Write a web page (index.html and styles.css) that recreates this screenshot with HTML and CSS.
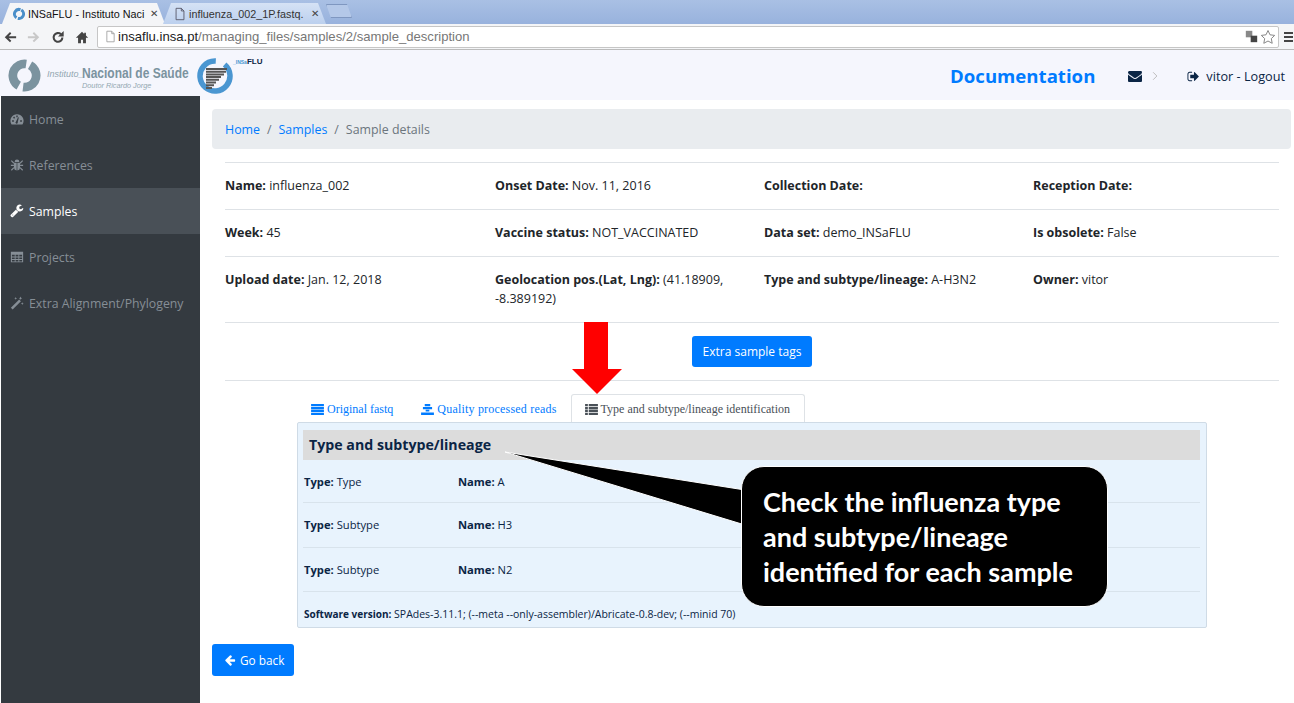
FILE: index.html
```html
<!DOCTYPE html>
<html>
  <head lang="en">
    <meta charset="UTF-8" />
    <title>INSaFLU - Sample details</title>
    <link rel="stylesheet" href="styles.css">
  </head>

  <body>
    <!-- browser chrome -->
    <div class="tabstrip">
      <div class="btab active">
        <svg class="favicon" viewBox="0 0 16 16"><circle cx="8" cy="8" r="5.200" fill="none" stroke="#4a8fc9" stroke-width="3.400" stroke-dasharray="14.500 1.800" transform="rotate(-60 8 8)"/></svg>
        <span class="btab-title">INSaFLU - Instituto Naci</span>
        <span class="btab-x">✕</span>
      </div>
      <div class="btab">
        <svg class="favicon" viewBox="0 0 16 16"><path d="M3.500 1.500h6l3 3v10h-9zM9.500 1.500v3h3" fill="none" stroke="#556"/></svg>
        <span class="btab-title">influenza_002_1P.fastq.</span>
        <span class="btab-x">✕</span>
      </div>
      <div class="btab-new"></div>
    </div>
    <div class="toolbar">
      <svg class="tool" viewBox="0 0 16 16"><path d="M15 7v2.400H6.500l3 3L8 14 2 8.200 8 2.400 9.500 4l-3 3z" fill="#444"/></svg>
      <svg class="tool" viewBox="0 0 16 16"><path d="M1 7v2.400h8.500l-3 3L8 14l6-5.800-6-5.800L6.500 4l3 3z" fill="#c8c8c8"/></svg>
      <svg class="tool" viewBox="0 0 16 16"><path d="M13 8.500a5 5 0 1 1-1.600-3.700" fill="none" stroke="#444" stroke-width="2.400"/><path d="M14.500 1v6.500H8z" fill="#444"/></svg>
      <svg class="tool" viewBox="0 0 16 16"><path d="M8 2 1 8.800h2.500V15h3.300v-4h2.400v4h3.300V8.800H15l-2.500-2.400V3h-2v1.500z" fill="#444"/></svg>
      <div class="omnibox">
        <svg class="omni-page" viewBox="0 0 16 16"><path d="M3.500 1.500h6l3 3v10h-9zM9.500 1.500v3h3" fill="#fff" stroke="#999"/></svg>
        <span class="url"><b>insaflu.insa.pt</b>/managing_files/samples/2/sample_description</span>
        <svg class="omni-tr" viewBox="0 0 16 16"><rect x="1" y="1" width="8" height="8" fill="#888"/><rect x="7" y="7" width="8" height="8" fill="#444"/></svg>
        <svg class="omni-star" viewBox="0 0 16 16"><path d="m8 1.500 2 4.300 4.700.6-3.400 3.200.9 4.700L8 12l-4.200 2.300.9-4.700L1.300 6.400 6 5.800z" fill="#fff" stroke="#888"/></svg>
      </div>
      <div class="menu-bars"><i></i><i></i><i></i></div>
    </div>

    <!-- site header -->
    <header class="topbar">
      <svg class="logo-insa" viewBox="0 0 34 34"><circle cx="17" cy="17" r="12" fill="none" stroke="#7b939f" stroke-width="9" stroke-dasharray="33 4.700" transform="rotate(-61.500 17 17)"/></svg>
      <div class="insa-text">
        <div class="insa-name"><em>Instituto_</em><strong>Nacional de Saúde</strong></div>
        <div class="insa-sub">Doutor Ricardo Jorge</div>
      </div>
      <svg class="logo-flu" viewBox="0 0 36 36">
        <circle cx="18" cy="18" r="15" fill="none" stroke="#4a96d1" stroke-width="5.500" stroke-dasharray="84 10.200" transform="rotate(-50 18 18)"/>
        <path d="M9 10h21v2H9zM9 12.700h20v2H9zM9 15.400h18v2H9zM9 18.100h15v2H9zM9 20.800h13v2H9zM9 23.500h10v2H9zM9 26.200h8v2H9zM9 28.900h6v2H9z" fill="#555"/>
      </svg>
      <div class="flu-text"><span>_INSa</span>FLU</div>
      <a class="doc-link">Documentation</a>
      <svg class="mail" viewBox="0 0 1792 1792"><path fill="#0b2545" d="M1792 710v794q0 66-47 113t-113 47h-1472q-66 0-113-47t-47-113v-794q44 49 101 87 362 246 497 345 57 42 92.500 65.500t94.500 48 110 24.500h2q51 0 110-24.500t94.500-48 92.500-65.500q170-123 498-345 57-39 100-87zm0-294q0 79-49 151t-122 123q-376 261-468 325-10 7-42.500 30.500t-54 38-52 32.500-57.500 27-50 9h-2q-23 0-50-9t-57.500-27-52-32.500-54-38-42.500-30.500q-91-64-262-182.500t-205-142.500q-62-42-117-115.500t-55-136.500q0-78 41.500-130t118.500-52h1472q65 0 112.500 47t47.500 113z"/></svg>
      <svg class="chev" viewBox="0 0 8 12"><path d="m1.500 1 5 5-5 5" fill="none" stroke="#bbb" stroke-width="1.300"/></svg>
      <svg class="signout" viewBox="0 0 1792 1792"><path fill="#0b2545" d="M704 1440q0 4 1 20t.5 26.500-3 23.500-10 19.500-20.500 6.500h-320q-119 0-203.500-84.500t-84.500-203.500v-704q0-119 84.500-203.500t203.500-84.500h320q13 0 22.500 9.500t9.500 22.500q0 4 1 20t.5 26.500-3 23.500-10 19.500-20.500 6.500h-320q-66 0-113 47t-47 113v704q0 66 47 113t113 47h312l11.500 1 11.500 3 8 5.500 7 9 2 13.500zm928-544q0 26-19 45l-544 544q-19 19-45 19t-45-19-19-45v-288h-448q-26 0-45-19t-19-45v-384q0-26 19-45t45-19h448v-288q0-26 19-45t45-19 45 19l544 544q19 19 19 45z"/></svg>
      <span class="user">vitor - Logout</span>
    </header>

    <div class="layout">
      <nav class="sidebar">
        <a class="side-item">
          <svg class="side-icon" viewBox="0 0 16 16"><path fill-rule="evenodd" d="M8 2.500a7.500 7.500 0 0 0-6.800 10.700l.6 1h12.400l.6-1A7.500 7.500 0 0 0 8 2.500zM7.200 4h1.600v2H7.200zM3.500 6l1.400-.8 1 1.700-1.400.8zM2.400 9.500h2v1.600h-2zM11.600 9.500h2v1.600h-2zM6.800 11l2.400-5 .9.300-1.300 5.300a1.300 1.300 0 1 1-2-.6z" fill="currentColor"/></svg>
          Home
        </a>
        <a class="side-item">
          <svg class="side-icon" viewBox="0 0 16 16"><path d="M5.300 4.500a2.700 2.700 0 0 1 5.400 0zM4.500 5.500h3.100v8.700a3.500 3.500 0 0 1-3.100-3.200zM8.400 5.500h3.100V11a3.500 3.500 0 0 1-3.100 3.200z" fill="currentColor"/><path d="M1.500 3l3 3M14.500 3l-3 3M1 8.500h3.500M15 8.500h-3.500M1.500 14l3-3M14.500 14l-3-3" stroke="currentColor" stroke-width="1.300"/></svg>
          References
        </a>
        <a class="side-item current">
          <svg class="side-icon" viewBox="0 0 1792 1792"><path fill="currentColor" d="M424 1408q0-26-19-45t-45-19-45 19-19 45 19 45 45 19 45-19 19-45zm644-420l-682 682q-37 37-90 37-52 0-91-37l-106-108q-38-36-38-90 0-53 38-91l681-681q39 98 114.500 173.500t173.500 114.500zm634-435q0 39-23 106-47 134-164.500 217.500t-258.500 83.500q-185 0-316.500-131.500t-131.500-316.500 131.500-316.500 316.500-131.500q58 0 121.500 16.500t107.500 46.500q16 11 16 28t-16 28l-293 169v224l193 111q5-3 79-48.500t135.500-81 70.500-35.500q15 0 23.500 10t8.500 25z"/></svg>
          Samples
        </a>
        <a class="side-item">
          <svg class="side-icon" viewBox="0 0 16 16"><path fill-rule="evenodd" d="M1 2h14v12H1zM2.200 5.500v2h3.200v-2zm4.200 0v2h3.200v-2zm4.200 0v2h3.200v-2zM2.200 8.500v1.800h3.200V8.500zm4.200 0v1.800h3.200V8.500zm4.200 0v1.800h3.200V8.500zM2.200 11.300V13h3.200v-1.700zm4.200 0V13h3.200v-1.700zm4.200 0V13h3.200v-1.700z" fill="currentColor"/></svg>
          Projects
        </a>
        <a class="side-item">
          <svg class="side-icon" viewBox="0 0 16 16"><path d="M1 13.500 10.500 4l2 2L3 15.500zM12 .5l.6 1.400L14 2.500l-1.400.6L12 4.500l-.6-1.400L10 2.500l1.400-.6zM6.500 1l.5 1.200 1.200.5-1.200.5-.5 1.200L6 3.200l-1.200-.5L6 2.200zM14 7l.5 1.200 1.200.5-1.200.5-.5 1.200-.5-1.200-1.200-.5 1.200-.5z" fill="currentColor"/></svg>
          Extra Alignment/Phylogeny
        </a>
      </nav>

      <main class="content">
        <ol class="breadcrumb">
          <li><a>Home</a></li>
          <li><a>Samples</a></li>
          <li class="now">Sample details</li>
        </ol>

        <table class="details">
          <tr>
            <td><b>Name:</b> influenza_002</td>
            <td><b>Onset Date:</b> Nov. 11, 2016</td>
            <td><b>Collection Date:</b></td>
            <td><b>Reception Date:</b></td>
          </tr>
          <tr>
            <td><b>Week:</b> 45</td>
            <td><b>Vaccine status:</b> NOT_VACCINATED</td>
            <td><b>Data set:</b> demo_INSaFLU</td>
            <td><b>Is obsolete:</b> False</td>
          </tr>
          <tr>
            <td><b>Upload date:</b> Jan. 12, 2018</td>
            <td><b>Geolocation pos.(Lat, Lng):</b> (41.18909, -8.389192)</td>
            <td><b>Type and subtype/lineage:</b> A-H3N2</td>
            <td><b>Owner:</b> vitor</td>
          </tr>
        </table>

        <div class="tags-row">
          <a class="btn">Extra sample tags</a>
        </div>

        <div class="tabs">
          <a class="tab">
            <svg class="tab-icon" viewBox="0 0 14 12"><path d="M0 0h14v2.400H0zM0 3.200h14v2.400H0zM0 6.400h14v2.400H0zM0 9.600h14V12H0z" fill="currentColor"/></svg>
            Original fastq
          </a>
          <a class="tab wide">
            <svg class="tab-icon" viewBox="0 0 14 12"><path d="M4 0h6v2.400H4zM2 3.200h10v2.400H2zM5 6.400h4v1.800H5zM0 9.200h14V12H0z" fill="currentColor"/></svg>
            Quality processed reads
          </a>
          <a class="tab selected">
            <svg class="tab-icon" viewBox="0 0 14 12"><path d="M0 0h3v2.400H0zM4 0h10v2.400H4zM0 3.200h3v2.400H0zM4 3.200h10v2.400H4zM0 6.400h3v2.400H0zM4 6.400h10v2.400H4zM0 9.600h3V12H0zM4 9.600h10V12H4z" fill="currentColor"/></svg>
            Type and subtype/lineage identification
          </a>
        </div>

        <section class="panel">
          <h4 class="panel-title">Type and subtype/lineage</h4>
          <div class="panel-row">
            <span class="cell-type"><b>Type:</b> Type</span>
            <span><b>Name:</b> A</span>
          </div>
          <div class="panel-row">
            <span class="cell-type"><b>Type:</b> Subtype</span>
            <span><b>Name:</b> H3</span>
          </div>
          <div class="panel-row">
            <span class="cell-type"><b>Type:</b> Subtype</span>
            <span><b>Name:</b> N2</span>
          </div>
          <div class="panel-row software">
            <span><b>Software version:</b> SPAdes-3.11.1; (--meta --only-assembler)/Abricate-0.8-dev; (--minid 70)</span>
          </div>
        </section>

        <a class="btn back">
          <svg class="back-icon" viewBox="0 0 1792 1792"><path fill="currentColor" d="M1664 896v128q0 53-32.500 90.500t-84.500 37.500h-704l293 294q38 36 38 90t-38 90l-75 76q-37 37-90 37-52 0-91-37l-651-652q-37-37-37-90 0-52 37-91l651-650q38-38 91-38 52 0 90 38l75 74q38 38 38 91t-38 91l-293 293h704q52 0 84.500 37.500t32.500 90.500z"/></svg>
          Go back
        </a>
      </main>
    </div>

    <!-- annotations drawn over the page -->
    <svg class="red-arrow" viewBox="0 0 50 72"><path d="M12 0h24v47h14L25 72 0 47h12z" fill="#f00"/></svg>
    <svg class="pointer" viewBox="0 0 250 80"><path d="M2 2 242 40v35z" fill="#000" stroke="#fff" stroke-width="1"/></svg>
    <div class="callout">Check the influenza type and subtype/lineage identified for each sample</div>
  </body>
</html>
```

FILE: styles.css
```css
* {
  padding: 0;
  margin: 0;
  box-sizing: border-box;
}

html,
body {
  height: 703px;
  overflow: hidden;
}

body {
  background-color: #fff;
  color: #0b2545;
  font: 13px "Open Sans", "Noto Sans", sans-serif;
  position: relative;
}

/* browser chrome */
.tabstrip {
  display: flex;
  align-items: flex-end;
  height: 24px;
  padding-left: 2px;
  background: linear-gradient(#a9c0e4, #98b2dd);
}

.btab {
  display: flex;
  align-items: center;
  width: 163px;
  height: 21px;
  margin-right: -2px;
  padding: 0 7px 0 10px;
  background: linear-gradient(#d5e2f5, #bcd0ee);
  clip-path: polygon(0 100%, 8px 0, calc(100% - 8px) 0, 100% 100%);
  font: 10.8px "Liberation Sans", sans-serif;
  color: #333;
}

.btab.active {
  background: #f4f5f7;
  color: #111;
}

.favicon {
  width: 14px;
  height: 14px;
  margin-right: 2px;
  flex: none;
}

.btab-title {
  flex: 1;
  overflow: hidden;
  white-space: nowrap;
}

.btab-x {
  font-size: 10px;
  color: #444;
  margin-left: 1px;
}

.btab-new {
  width: 26px;
  height: 14px;
  margin: 0 0 6px 2px;
  background-color: #b4c8e8;
  border: 1px solid #7f97c0;
  clip-path: polygon(0 0, calc(100% - 5px) 0, 100% 100%, 5px 100%);
}

.toolbar {
  display: flex;
  align-items: center;
  gap: 10px;
  height: 26px;
  padding-left: 3px;
  background-color: #f4f5f7;
  border-bottom: 1px solid #bbb;
}

.tool {
  width: 14px;
  height: 14px;
  flex: none;
}

.omnibox {
  display: flex;
  align-items: center;
  flex: 1;
  height: 22px;
  margin-left: -2px;
  padding: 0 2px 0 6px;
  background-color: #fff;
  border: 1px solid #c6c6c6;
  border-radius: 2px;
}

.omni-page {
  width: 13px;
  height: 13px;
  margin-right: 1px;
}

.url {
  flex: 1;
  font: 13.1px "Liberation Sans", sans-serif;
  color: #777;
}

.url b {
  font-weight: normal;
  color: #222;
}

.omni-tr {
  width: 13px;
  height: 13px;
  margin-right: 2px;
}

.omni-star {
  width: 16px;
  height: 16px;
}

.menu-bars {
  display: flex;
  flex-direction: column;
  gap: 2px;
  width: 9px;
  margin: 0 1px 0 -5px;
}

.menu-bars i {
  height: 2px;
  background-color: #444;
}

/* site header */
.topbar {
  display: flex;
  align-items: flex-start;
  height: 46px;
  padding: 9px 9px 0 8px;
  background-color: #f5f6fd;
}

.logo-insa {
  width: 33px;
  height: 33px;
  flex: none;
}

.insa-text {
  width: 150px;
  margin: 4px 0 0 6px;
  flex: none;
  color: #7b939f;
  white-space: nowrap;
}

.insa-name {
  display: flex;
  align-items: flex-end;
  height: 18px;
}

.insa-name em {
  width: 35px;
  font: italic 9px/13px "Liberation Sans", sans-serif;
  color: #93a7b1;
}

.insa-name strong {
  font: bold 15px/17px "Liberation Sans", sans-serif;
  transform: scaleX(0.8);
  transform-origin: left;
}

.insa-sub {
  padding-left: 35px;
  font: italic 7.3px/9px "Liberation Sans", sans-serif;
  color: #93a7b1;
}

.logo-flu {
  width: 36px;
  height: 36px;
  margin-top: -1px;
  flex: none;
}

.flu-text {
  margin-top: -2px;
  font: bold 8px/10px "Liberation Sans", sans-serif;
  color: #0b2545;
}

.flu-text span {
  font-size: 5px;
  color: #4a96d1;
}

.doc-link {
  margin: 4px 0 0 auto;
  font-size: 18.6px;
  line-height: 26px;
  font-weight: 700;
  color: #007bff;
}

.mail {
  width: 14px;
  height: 14px;
  margin: 10px 0 0 33px;
}

.chev {
  width: 6px;
  height: 10px;
  margin: 12px 0 0 10px;
}

.signout {
  width: 13px;
  height: 13px;
  margin: 11px 0 0 29px;
}

.user {
  margin: 8px 0 0 6px;
  font-size: 12.7px;
  color: #0b2545;
}

/* sidebar + page */
.layout {
  display: flex;
  height: 607px;
}

.sidebar {
  width: 199px;
  margin-left: 1px;
  flex: none;
  background-color: #343a40;
}

.side-item {
  display: flex;
  align-items: center;
  height: 46px;
  padding-left: 9px;
  font-size: 12.3px;
  color: #868e96;
  white-space: nowrap;
}

.side-item.current {
  background-color: #495057;
  color: #fff;
}

.side-icon {
  width: 14px;
  height: 14px;
  margin-right: 5px;
  flex: none;
}

.content {
  flex: 1;
  padding: 9px 3px 0 12px;
  border-top: 4px solid #f5f6fd;
  min-width: 0;
}

.breadcrumb {
  display: flex;
  height: 40px;
  align-items: center;
  padding-left: 13px;
  background-color: #e9ecef;
  border-radius: 4px;
  font-size: 12.4px;
  list-style: none;
}

.breadcrumb a {
  color: #007bff;
}

.breadcrumb li + li::before {
  content: "/";
  padding: 0 7px;
  color: #6c757d;
}

.breadcrumb .now {
  color: #6c757d;
}

.details {
  table-layout: fixed;
  border-collapse: collapse;
  width: 1054px;
  margin: 13px 0 0 13px;
  color: #212529;
  font-size: 12.5px;
  line-height: 19px;
}

.details td {
  padding: 13px 12px 14px 0;
  border-top: 1px solid #dee2e6;
  vertical-align: top;
}

.details td:nth-child(1) {
  width: 270px;
}

.details td:nth-child(2),
.details td:nth-child(3) {
  width: 269px;
}

.tags-row {
  display: flex;
  justify-content: center;
  align-items: flex-start;
  width: 1054px;
  height: 59px;
  margin-left: 13px;
  padding-top: 13px;
  border-top: 1px solid #dee2e6;
  border-bottom: 1px solid #dee2e6;
}

.btn {
  display: inline-flex;
  align-items: center;
  height: 31px;
  padding: 0 11px;
  background-color: #007bff;
  border-radius: 3px;
  color: #fff;
  font-size: 12px;
}

.tabs {
  display: flex;
  height: 28px;
  margin: 13px 0 0 85px;
  font: 12px "Liberation Serif", serif;
  color: #007bff;
}

.tab {
  display: flex;
  align-items: center;
  padding: 2px 14px 0;
  white-space: nowrap;
}

.tab.wide {
  letter-spacing: 0.2px;
}

.tab.selected {
  padding: 2px 14px 0 13px;
  background-color: #fff;
  border: 1px solid #dee2e6;
  border-bottom: 0;
  border-radius: 3px 3px 0 0;
  color: #495057;
}

.tab-icon {
  width: 13px;
  height: 11px;
  margin-right: 3px;
}

.panel {
  width: 910px;
  height: 206px;
  margin-left: 85px;
  padding: 7px 6px 0 5px;
  background-color: #e8f3fd;
  border: 1px solid #cfdbe6;
  border-radius: 2px;
  font-size: 11.2px;
  color: #0b2545;
}

.panel-title {
  height: 30px;
  padding-left: 6px;
  background-color: #dcdcdc;
  font-size: 14.2px;
  font-weight: 700;
  line-height: 30px;
}

.panel-row {
  display: flex;
  align-items: center;
  height: 44.5px;
  padding-left: 1px;
  border-bottom: 1px solid #d8e3ec;
}

.panel-title + .panel-row {
  height: 43px;
}

.panel-row.software {
  border-bottom: 0;
  font-size: 10.5px;
}

.panel-row.software b {
  font-size: 10px;
}

.cell-type {
  width: 154px;
}

.btn.back {
  height: 32px;
  margin-top: 16px;
  padding: 0 10px 0 12px;
  font-size: 11.8px;
}

.back-icon {
  width: 12px;
  height: 12px;
  margin-right: 4px;
}

/* annotations on top of the page */
.red-arrow {
  position: absolute;
  left: 572px;
  top: 322px;
  width: 50px;
  height: 72px;
}

.pointer {
  position: absolute;
  left: 503px;
  top: 450px;
  width: 250px;
  height: 80px;
}

.callout {
  position: absolute;
  left: 741px;
  top: 466px;
  width: 367px;
  height: 141px;
  padding: 17px 20px 0 21px;
  background-color: #000;
  border: 1px solid #fff;
  border-radius: 23px;
  color: #fff;
  font: bold 27px/35px Lato, "Open Sans", sans-serif;
}
```
